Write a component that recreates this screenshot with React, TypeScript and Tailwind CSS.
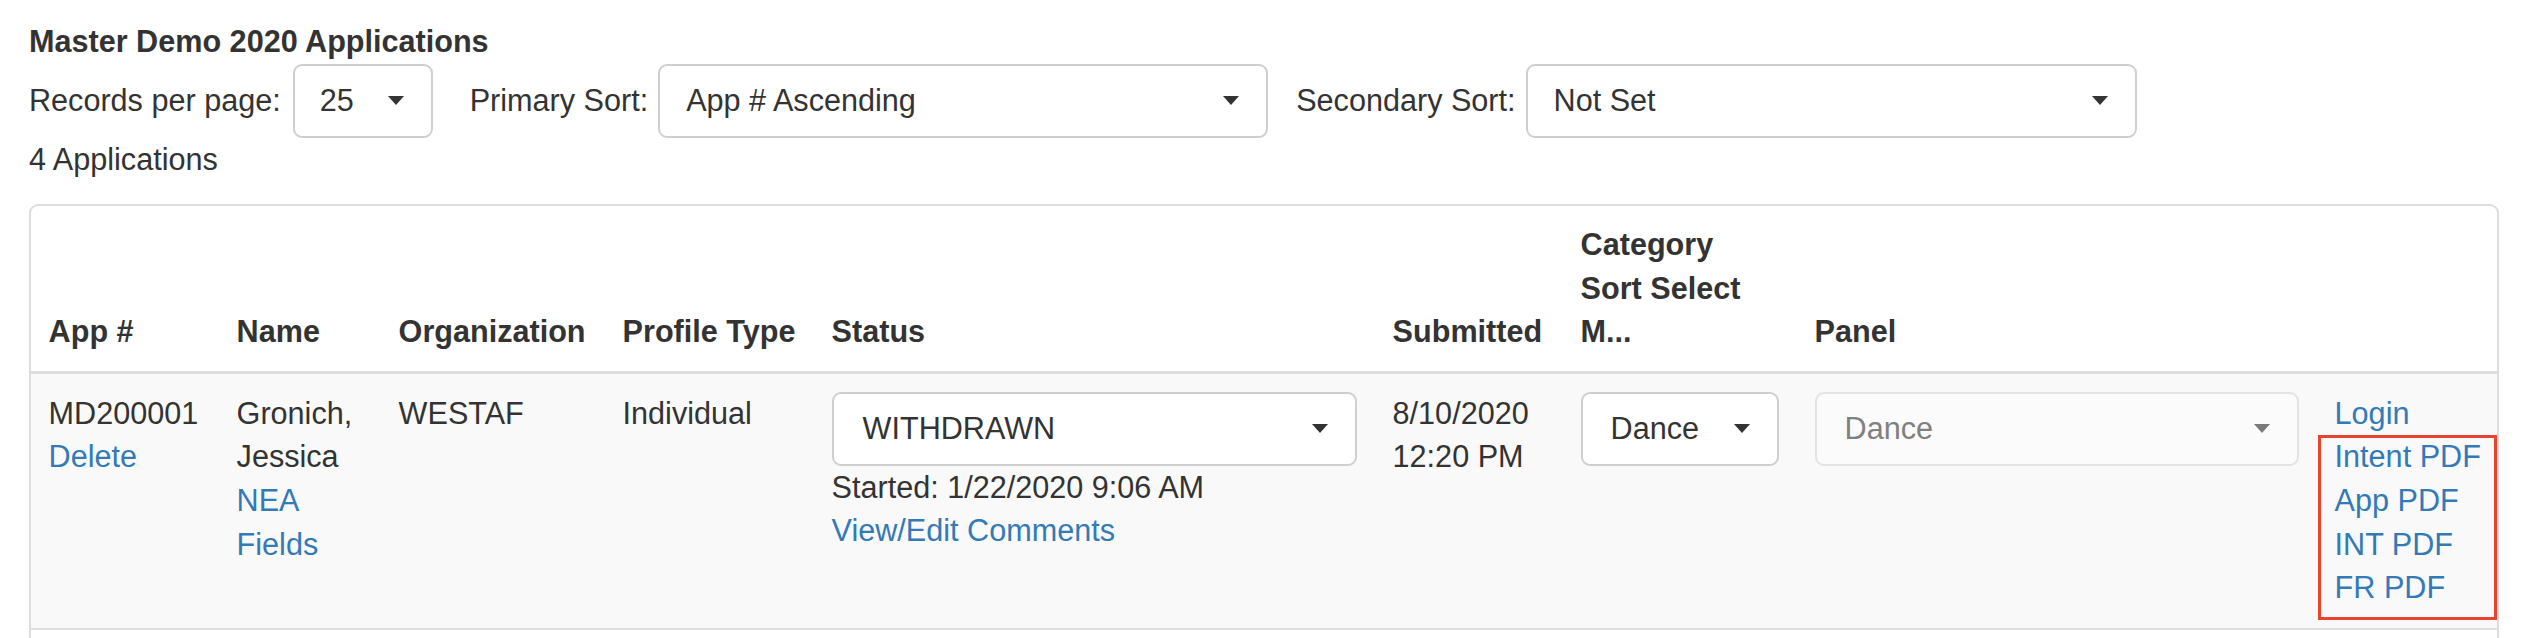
import React from "react";

const Caret = ({ muted }: { muted?: boolean }) => (
  <svg width="16" height="9" viewBox="0 0 16 9" className="shrink-0">
    <path d="M0 0h16L8 9z" fill={muted ? "#7a7a7a" : "#333333"} />
  </svg>
);

type SelectProps = {
  value: string;
  className?: string;
  muted?: boolean;
};

const FakeSelect = ({ value, className = "", muted }: SelectProps) => (
  <div
    className={`flex h-[74px] shrink-0 items-center justify-between rounded-[9px] border-2 pr-[27px] ${
      muted
        ? "border-[#e3e3e3] bg-[#fbfbfb] text-[#808080]"
        : "border-[#cfcfcf] bg-white text-[#333333]"
    } ${className}`}
  >
    <span className="whitespace-nowrap">{value}</span>
    <Caret muted={muted} />
  </div>
);

const Link = ({ children }: { children: React.ReactNode }) => (
  <a href="#" className="block text-[#337ab7]">
    {children}
  </a>
);

const headers = [
  { label: "App #", w: "w-[188px]" },
  { label: "Name", w: "w-[162px]" },
  { label: "Organization", w: "w-[224px]" },
  { label: "Profile Type", w: "w-[209px]" },
  { label: "Status", w: "w-[561px]" },
  { label: "Submitted", w: "w-[188px]" },
  { label: "Category Sort Select M...", w: "w-[234px]" },
  { label: "Panel", w: "w-[520px]" },
  { label: "", w: "w-[180px]" },
];

export default function App() {
  return (
    <div className="min-h-screen bg-white pl-[29px] pr-[23px] pt-[20px] font-['Liberation_Sans',Arial,sans-serif] text-[30.6px] leading-[43.7px] text-[#333333]">
      <h4 className="font-bold">Master Demo 2020 Applications</h4>

      {/* sort controls */}
      <div className="flex items-center">
        <span className="mr-[12px]">Records per page:</span>
        <FakeSelect value="25" className="w-[140px] pl-[25px]" />
        <span className="ml-[37px] mr-[10px]">Primary Sort:</span>
        <FakeSelect value="App # Ascending" className="w-[610px] pl-[26px]" />
        <span className="ml-[28px] mr-[10px]">Secondary Sort:</span>
        <FakeSelect value="Not Set" className="w-[611px] pl-[26px]" />
      </div>

      <p>4 Applications</p>

      {/* applications table */}
      <div className="mt-[23px] overflow-hidden rounded-[9px] border-2 border-[#dddddd]">
        <table className="w-full table-fixed border-collapse">
          <thead>
            <tr>
              {headers.map((h, i) => (
                <th
                  key={i}
                  className={`${h.w} border-b-[3px] border-[#dddddd] px-[17.6px] py-[16.5px] text-left align-bottom font-bold`}
                >
                  {h.label}
                </th>
              ))}
            </tr>
          </thead>
          <tbody>
            <tr className="border-b-2 border-[#dddddd] bg-[#f9f9f9]">
              <td className="px-[17.6px] pb-[17.5px] pt-[18px] align-top">
                MD200001
                <Link>Delete</Link>
              </td>
              <td className="px-[17.6px] pb-[17.5px] pt-[18px] align-top">
                Gronich, Jessica
                <Link>NEA Fields</Link>
              </td>
              <td className="px-[17.6px] pb-[17.5px] pt-[18px] align-top">WESTAF</td>
              <td className="px-[17.6px] pb-[17.5px] pt-[18px] align-top">Individual</td>
              <td className="px-[17.6px] pb-[17.5px] pt-[18px] align-top">
                <FakeSelect value="WITHDRAWN" className="w-full pl-[29px]" />
                <div>Started: 1/22/2020 9:06 AM</div>
                <Link>View/Edit Comments</Link>
              </td>
              <td className="px-[17.6px] pb-[17.5px] pt-[18px] align-top">
                8/10/2020 12:20 PM
              </td>
              <td className="px-[17.6px] pb-[17.5px] pt-[18px] align-top">
                <FakeSelect value="Dance" className="w-full pl-[28px]" />
              </td>
              <td className="px-[17.6px] pb-[17.5px] pt-[18px] align-top">
                <FakeSelect value="Dance" muted className="w-full pl-[28px]" />
              </td>
              <td className="px-[17.6px] pb-[17.5px] pt-[18px] align-top">
                <div className="relative whitespace-nowrap">
                  <Link>Login</Link>
                  <Link>Intent PDF</Link>
                  <Link>App PDF</Link>
                  <Link>INT PDF</Link>
                  <Link>FR PDF</Link>
                  {/* highlight annotation */}
                  <div className="pointer-events-none absolute left-[-17px] top-[43.5px] h-[185px] w-[179px] border-[3.5px] border-[#e8432e]" />
                </div>
              </td>
            </tr>
            <tr className="bg-white">
              <td colSpan={9} className="h-[120px]" />
            </tr>
          </tbody>
        </table>
      </div>
    </div>
  );
}
